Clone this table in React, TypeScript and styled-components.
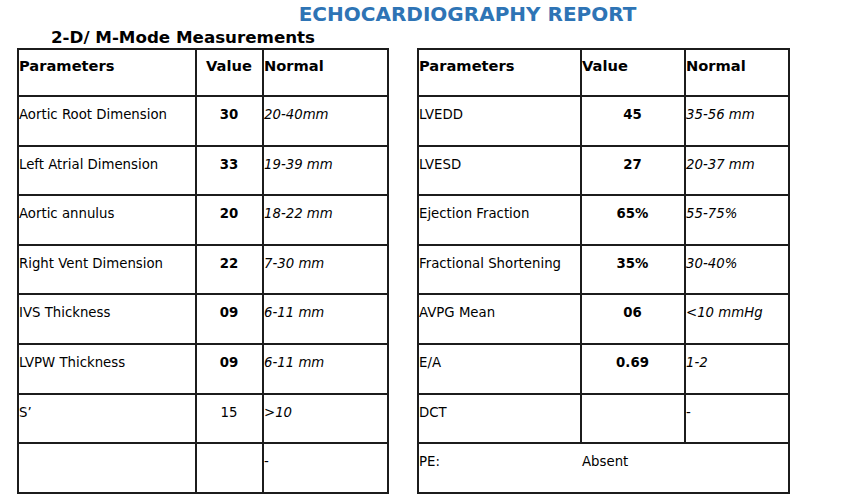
import React from "react";
import styled, { createGlobalStyle } from "styled-components";

const GlobalStyle = createGlobalStyle`
  html, body {
    margin: 0;
    padding: 0;
    background: #ffffff;
  }
  body {
    font-family: "DejaVu Sans", Verdana, sans-serif;
    color: #000;
  }
`;

const Page = styled.div`
  width: 867px;
  height: 502px;
  box-sizing: border-box;
  padding: 3px 0 0 0;
  overflow: hidden;
`;

const Title = styled.h1`
  margin: 0;
  padding-left: 68px;
  text-align: center;
  font-family: "DejaVu Sans", Verdana, sans-serif;
  font-size: 20px;
  font-weight: bold;
  line-height: 23px;
  color: #2e74b5;
`;

const Subtitle = styled.h2`
  margin: 2px 0 0 51px;
  font-family: "DejaVu Sans", Verdana, sans-serif;
  font-size: 16.7px;
  font-weight: bold;
  line-height: 19px;
  color: #000;
`;

const Tables = styled.div`
  display: flex;
  gap: 28px;
  padding-left: 17px;
  margin-top: 1px;
  align-items: flex-start;
`;

const Table = styled.table<{ $width: number }>`
  width: ${(p) => p.$width}px;
  table-layout: fixed;
  border-collapse: collapse;
  border: 2px solid #1c1c1c;
`;

const HeadRow = styled.tr`
  height: 47px;
`;

const BodyRow = styled.tr`
  height: 49.6px;
`;

const Cell = styled.td<{
  $align?: "left" | "center";
  $bold?: boolean;
  $italic?: boolean;
  $head?: boolean;
}>`
  border: 2px solid #1c1c1c;
  padding: ${(p) => (p.$head ? "7px" : "10px")} 1px 0 0;
  vertical-align: top;
  text-align: ${(p) => p.$align ?? "left"};
  font-family: "DejaVu Sans", Verdana, sans-serif;
  font-size: ${(p) => (p.$head ? "14.67px" : "13.3px")};
  line-height: ${(p) => (p.$head ? "17px" : "15px")};
  font-weight: ${(p) => (p.$bold || p.$head ? "bold" : "normal")};
  font-style: ${(p) => (p.$italic ? "italic" : "normal")};
  white-space: nowrap;
  overflow: hidden;
`;

const Split = styled.div`
  display: flex;
`;

const SplitLabel = styled.span<{ $width: number }>`
  width: ${(p) => p.$width}px;
  flex: none;
`;

type Row = { name: string; value: string; bold: boolean; normal: string; italic: boolean };

const leftRows: Row[] = [
  { name: "Aortic Root Dimension", value: "30", bold: true, normal: "20-40mm", italic: true },
  { name: "Left Atrial Dimension", value: "33", bold: true, normal: "19-39 mm", italic: true },
  { name: "Aortic annulus", value: "20", bold: true, normal: "18-22 mm", italic: true },
  { name: "Right Vent Dimension", value: "22", bold: true, normal: "7-30 mm", italic: true },
  { name: "IVS Thickness", value: "09", bold: true, normal: "6-11 mm", italic: true },
  { name: "LVPW Thickness", value: "09", bold: true, normal: "6-11 mm", italic: true },
  { name: "S\u2019", value: "15", bold: false, normal: ">10", italic: true },
  { name: "", value: "", bold: false, normal: "-", italic: false },
];

const rightRows: Row[] = [
  { name: "LVEDD", value: "45", bold: true, normal: "35-56 mm", italic: true },
  { name: "LVESD", value: "27", bold: true, normal: "20-37 mm", italic: true },
  { name: "Ejection Fraction", value: "65%", bold: true, normal: "55-75%", italic: true },
  { name: "Fractional Shortening", value: "35%", bold: true, normal: "30-40%", italic: true },
  { name: "AVPG Mean", value: "06", bold: true, normal: "<10 mmHg", italic: true },
  { name: "E/A", value: "0.69", bold: true, normal: "1-2", italic: true },
  { name: "DCT", value: "", bold: false, normal: "-", italic: false },
];

export default function App() {
  return (
    <>
      <GlobalStyle />
      <Page>
        <Title>ECHOCARDIOGRAPHY REPORT</Title>
        <Subtitle>2-D/ M-Mode Measurements</Subtitle>
        <Tables>
          <Table $width={370}>
            <colgroup>
              <col style={{ width: 178 }} />
              <col style={{ width: 67 }} />
              <col style={{ width: 125 }} />
            </colgroup>
            <tbody>
              <HeadRow>
                <Cell $head>Parameters</Cell>
                <Cell $head $align="center">Value</Cell>
                <Cell $head>Normal</Cell>
              </HeadRow>
              {leftRows.map((r, i) => (
                <BodyRow key={i}>
                  <Cell>{r.name}</Cell>
                  <Cell $align="center" $bold={r.bold}>{r.value}</Cell>
                  <Cell $italic={r.italic}>{r.normal}</Cell>
                </BodyRow>
              ))}
            </tbody>
          </Table>
          <Table $width={371}>
            <colgroup>
              <col style={{ width: 163 }} />
              <col style={{ width: 104 }} />
              <col style={{ width: 104 }} />
            </colgroup>
            <tbody>
              <HeadRow>
                <Cell $head>Parameters</Cell>
                <Cell $head>Value</Cell>
                <Cell $head>Normal</Cell>
              </HeadRow>
              {rightRows.map((r, i) => (
                <BodyRow key={i}>
                  <Cell>{r.name}</Cell>
                  <Cell $align="center" $bold={r.bold}>{r.value}</Cell>
                  <Cell $italic={r.italic}>{r.normal}</Cell>
                </BodyRow>
              ))}
              <BodyRow>
                <Cell colSpan={3}>
                  <Split>
                    <SplitLabel $width={163}>PE:</SplitLabel>
                    <span>Absent</span>
                  </Split>
                </Cell>
              </BodyRow>
            </tbody>
          </Table>
        </Tables>
      </Page>
    </>
  );
}
